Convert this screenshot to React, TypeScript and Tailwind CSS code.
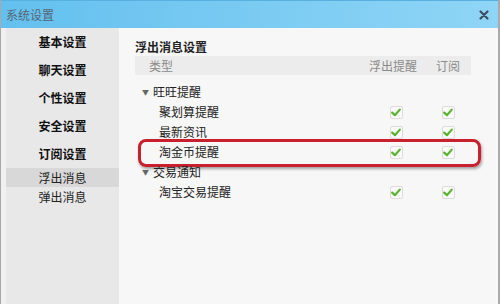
import React from "react";

// 侧边栏菜单
const menu = ["基本设置", "聊天设置", "个性设置", "安全设置", "订阅设置"];
const subMenu = ["浮出消息", "弹出消息"];

type Row = { label: string; group?: boolean; highlight?: boolean; checks?: boolean };

const rows: Row[] = [
  { label: "旺旺提醒", group: true },
  { label: "聚划算提醒", checks: true },
  { label: "最新资讯", checks: true },
  { label: "淘金币提醒", checks: true, highlight: true },
  { label: "交易通知", group: true },
  { label: "淘宝交易提醒", checks: true },
];

function Check() {
  return (
    <div className="w-[13px] h-[13px] border border-[#dcdcdc] bg-[#fafafa] rounded-[2px] flex items-center justify-center">
      <svg width="10" height="9" viewBox="0 0 10 9">
        <path d="M1.2 4.6 L3.9 7.2 L8.8 1.6" fill="none" stroke="#58b52c" strokeWidth="2.2" strokeLinecap="round" strokeLinejoin="round" />
      </svg>
    </div>
  );
}

export default function App() {
  return (
    <div
      className="w-[500px] h-[304px] flex flex-col bg-[#f0f0f0] border-l border-r-2 border-[#a9a9a9] overflow-hidden text-[12px] text-[#222]"
      style={{ fontFamily: '"Noto Sans CJK SC", "Liberation Sans", sans-serif' }}
    >
      {/* 标题栏 */}
      <div className="h-[28px] shrink-0 flex items-center justify-between pl-[5px] pr-[9px] border-t border-[#58b0e0] bg-gradient-to-r from-[#63c0ee] to-[#8fd5f6]">
        <span className="text-[#566676] text-[12px]">系统设置</span>
        <svg width="10" height="10" viewBox="0 0 10 10">
          <path d="M1.5 1.5 L8.5 8.5 M8.5 1.5 L1.5 8.5" stroke="#3e4f60" strokeWidth="2.2" strokeLinecap="round" />
        </svg>
      </div>

      <div className="flex flex-1 pl-[5px]">
        {/* 左侧菜单 */}
        <div className="w-[113px] bg-[#e8e8e8] flex flex-col">
          {menu.map((m) => (
            <div key={m} className="h-[28px] flex items-center justify-center font-bold text-[#111]">
              {m}
            </div>
          ))}
          {subMenu.map((m, i) => (
            <div
              key={m}
              className={`h-[19px] flex items-center justify-center text-[#222] ${i === 0 ? "bg-[#d8d8d8]" : ""}`}
            >
              {m}
            </div>
          ))}
        </div>

        {/* 右侧内容 */}
        <div className="flex-1 bg-[#f7f7f7] pl-[16px] pr-[27px] pt-[12px]">
          <div className="h-[14px] leading-[14px] font-bold text-[#222]">浮出消息设置</div>
          <div className="mt-[2px] h-[19px] bg-[#ececec] flex items-center text-[#8a8a8a]">
            <div className="flex-1 pl-[14px]">类型</div>
            <div className="w-[50px] text-center">浮出提醒</div>
            <div className="w-[10px]" />
            <div className="w-[40px] text-center">订阅</div>
            <div className="w-[3px]" />
          </div>

          <div className="mt-[7px] flex flex-col">
            {rows.map((r) => (
              <div key={r.label} className="relative h-[20px] flex items-center text-[#222]">
                {r.group ? (
                  <div className="flex items-center pl-[7px]">
                    <span className="text-[7px] text-[#666] mr-[4px]">▼</span>
                    <span>{r.label}</span>
                  </div>
                ) : (
                  <div className="flex-1 pl-[24px]">{r.label}</div>
                )}
                {r.checks && (
                  <>
                    <div className="w-[50px] flex justify-center pl-[6px]">
                      <Check />
                    </div>
                    <div className="w-[10px]" />
                    <div className="w-[40px] flex justify-center">
                      <Check />
                    </div>
                    <div className="w-[3px]" />
                  </>
                )}
                {r.highlight && (
                  <div className="absolute left-[3px] -right-[10px] -top-[3px] -bottom-[5px] border-[3px] border-[#c8202d] rounded-[8px] shadow-[1px_2px_3px_rgba(0,0,0,0.35)]" />
                )}
              </div>
            ))}
          </div>
        </div>
      </div>
    </div>
  );
}
